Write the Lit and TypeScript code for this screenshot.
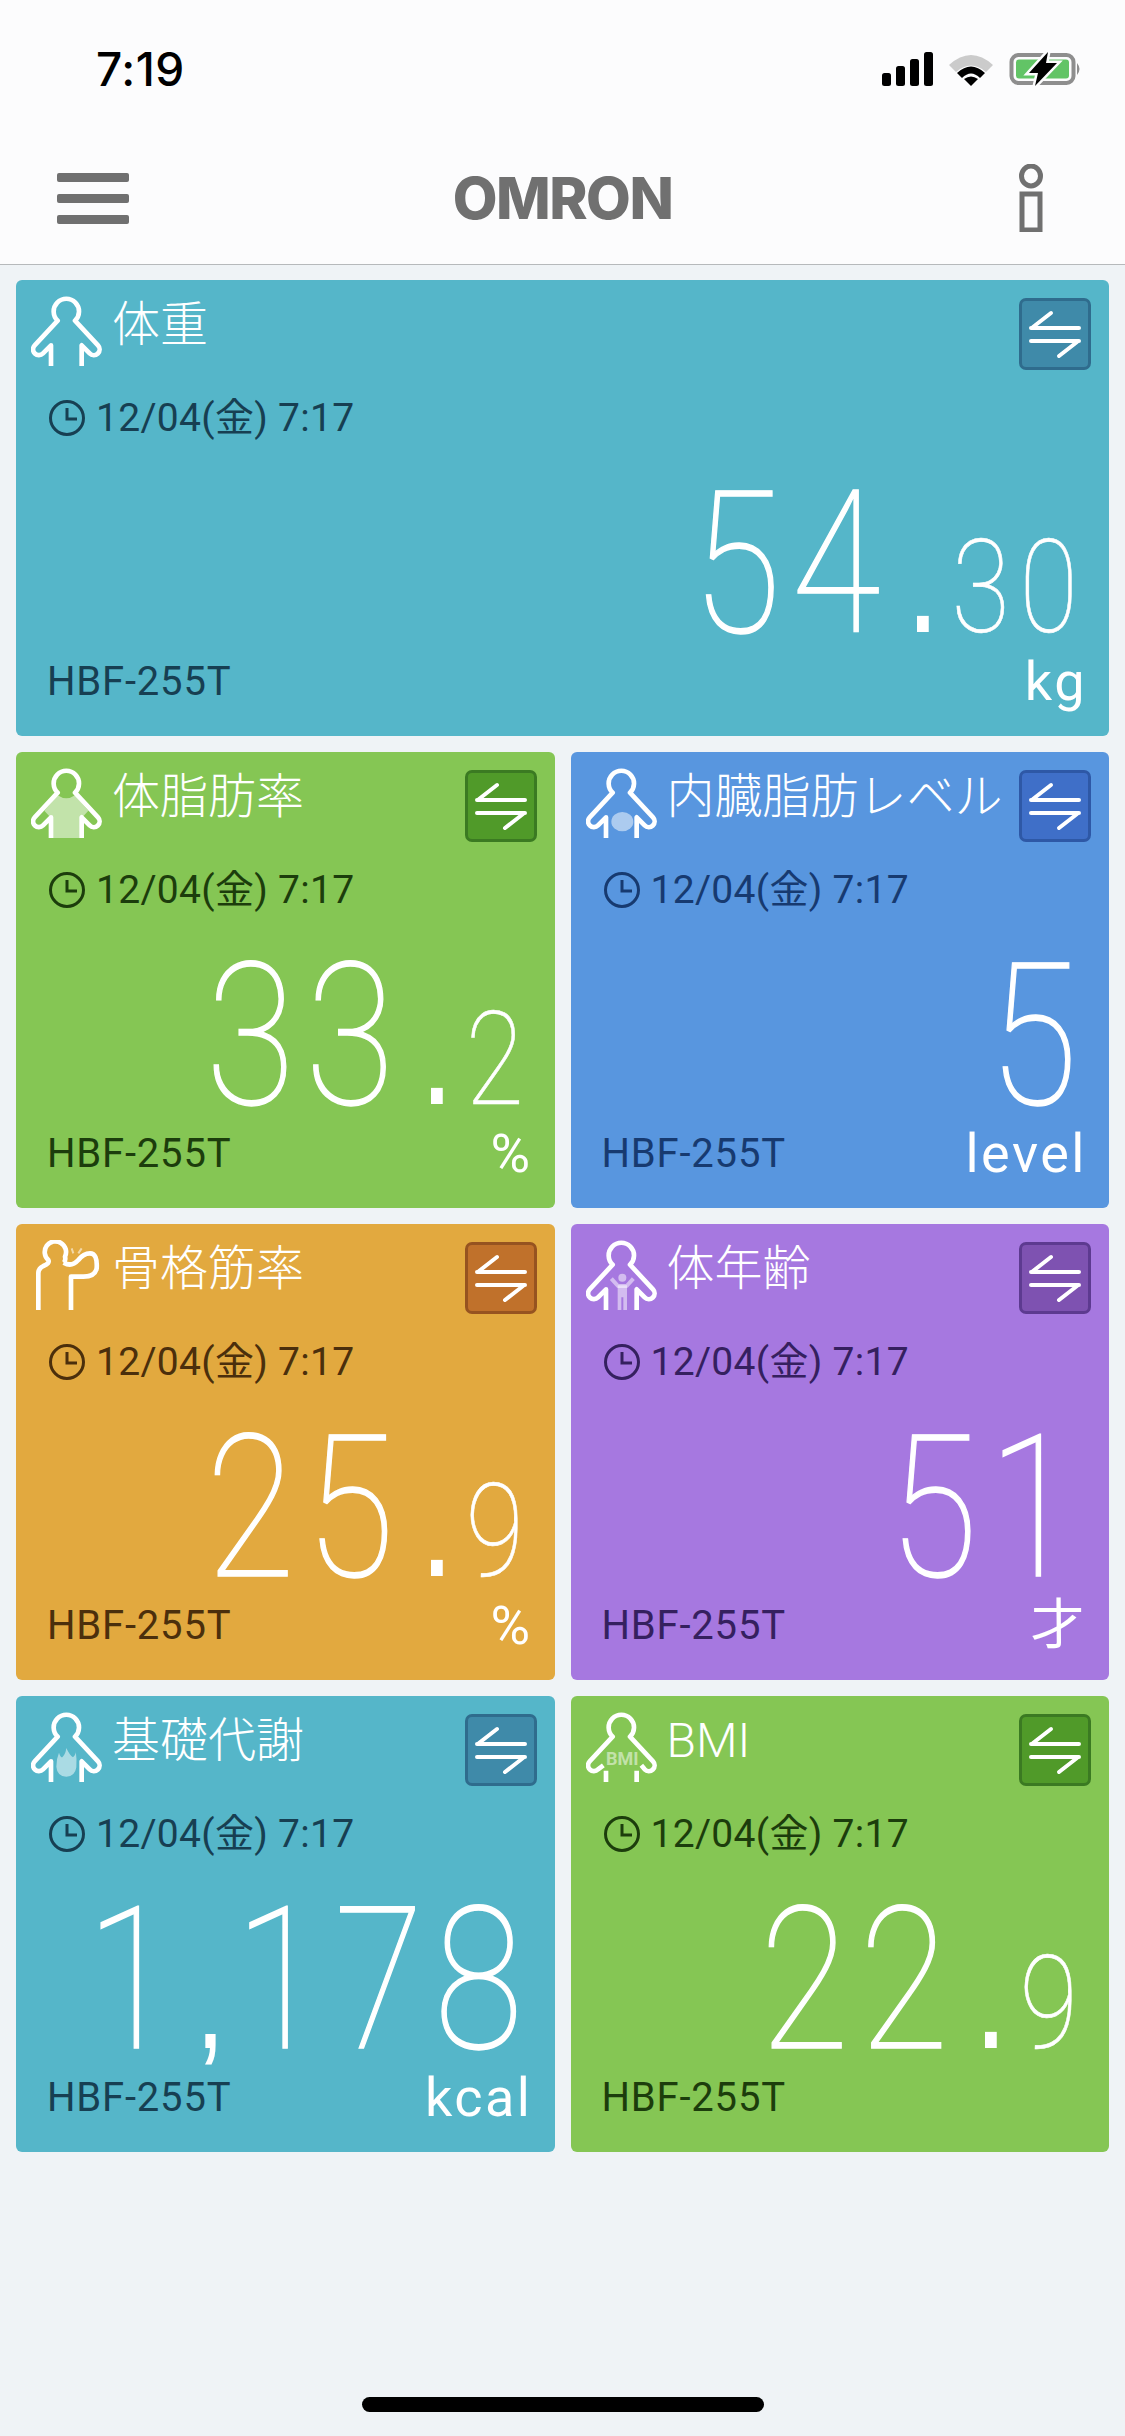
import { LitElement, css, html, svg } from 'lit'
import { customElement } from 'lit/decorators.js'

interface Metric {
  title: string
  tone: string
  icon: string
  int: string
  dec?: string
  unit: string
  wide?: boolean
}

const metrics: Metric[] = [
  { title: '体重', tone: 'teal', icon: 'plain', int: '54', dec: '30', unit: 'kg', wide: true },
  { title: '体脂肪率', tone: 'green', icon: 'fat', int: '33', dec: '2', unit: '%' },
  { title: '内臓脂肪レベル', tone: 'blue', icon: 'visceral', int: '5', unit: 'level' },
  { title: '骨格筋率', tone: 'orange', icon: 'muscle', int: '25', dec: '9', unit: '%' },
  { title: '体年齢', tone: 'purple', icon: 'age', int: '51', unit: '才' },
  { title: '基礎代謝', tone: 'teal', icon: 'flame', int: '1,178', unit: 'kcal' },
  { title: 'BMI', tone: 'green', icon: 'bmi', int: '22', dec: '9', unit: '' },
]

// head and arms are one open outline, the neck has no closing arc
const bodyPath = svg`
  <path d="M60 210 V148 L36 172 A17 17 0 0 1 11 148 L80 74 A38 38 0 1 1 132 74 L201 148 A17 17 0 0 1 176 172 L152 148 V210" />
`

function personIcon(kind: string) {
  if (kind === 'muscle') {
    return html`<svg class="person" viewBox="0 0 216 210">
      <path d="M22 210 V100 Q22 85 37 78 Q57 70 52 60 A32 32 0 1 1 102 50 Q105 62 98 68" />
      <path d="M98 68 Q122 82 142 60 Q157 40 177 40 Q200 40 197 85 Q192 110 157 110 H120 V210" />
      <path class="thin" d="M122 25 L127 40 M152 25 L142 40" />
    </svg>`
  }
  if (kind === 'bmi') {
    return html`<svg class="person" viewBox="0 0 216 210">
      <path d="M52 160 L36 172 A17 17 0 0 1 11 148 L80 74 A38 38 0 1 1 132 74 L201 148 A17 17 0 0 1 176 172 L166 160 M60 176 V210 M152 176 V210" />
      <text class="bmi" x="109" y="159" text-anchor="middle">BMI</text>
    </svg>`
  }
  return html`<svg class="person" viewBox="0 0 216 210">
    ${kind === 'fat' ? svg`<path class="pale" d="M80 82 Q106 100 132 82 L172 128 L152 150 V210 H60 V150 L40 128 Z" />` : ''}
    ${kind === 'visceral' ? svg`<ellipse class="pale" cx="109" cy="161" rx="33" ry="29" />` : ''}
    ${kind === 'age' ? svg`
      <circle class="pale" cx="109" cy="113" r="12" />
      <path class="pale-line" d="M76 116 L96 138 H122 L142 116" />
      <path class="pale" d="M95 136 H123 V210 H112 V172 H106 V210 H95 Z" />` : ''}
    ${kind === 'flame' ? svg`<path class="flame" d="M106 108 Q116 130 126 136 Q136 126 134 116 Q138 140 136 166 Q132 194 106 194 Q78 192 76 164 Q76 140 84 122 Q88 136 94 136 Q104 126 106 108 Z" />` : ''}
    ${bodyPath}
  </svg>`
}

@customElement('metric-card')
export class MetricCard extends LitElement {
  static properties = { data: { attribute: false } }
  data!: Metric

  render() {
    const m = this.data
    const [head, tail] = m.int.split(',')
    return html`
      <section class="card ${m.tone}">
        <header class="head">
          ${personIcon(m.icon)}
          <h2 class="title">${m.title}</h2>
          <button class="swap" aria-label="switch">
            <svg viewBox="0 0 66 66">
              <path d="M9 27 H57 M9 40 H57 M29 12 L11 26 M37 55 L55 41" />
            </svg>
          </button>
        </header>
        <div class="time">
          <svg class="clock" viewBox="0 0 36 36">
            <circle cx="18" cy="18" r="16.5" />
            <path d="M18 8 V19 H28" />
          </svg>
          <span>12/04(金) 7:17</span>
        </div>
        <div class="value">
          <span class="num"
            ><span class="int">${head}</span>${tail
              ? html`<span class="comma">,</span><span class="int">${tail}</span>`
              : ''}${m.dec
              ? html`<span class="dot">.</span><span class="dec">${m.dec}</span>`
              : ''}</span
          >
        </div>
        <footer class="foot">
          <span class="model">HBF-255T</span>
          <span class="unit">${m.unit}</span>
        </footer>
      </section>
    `
  }

  static styles = css`
    :host { display: block; min-width: 0; }
    .card {
      box-sizing: border-box;
      height: 456px;
      border-radius: 6px;
      padding: 16px 18px 0 15px;
      display: flex;
      flex-direction: column;
      background: var(--bg);
      color: #fff;
      overflow: hidden;
      font-family: Roboto, "Noto Sans CJK JP", sans-serif;
    }
    .teal { --bg: #55b6c9; --ink: #173f52; --btn: #3f8aa9; --edge: #2f6c8d; }
    .green { --bg: #85c654; --ink: #1c3d0c; --btn: #509a29; --edge: #3b7a22; }
    .blue { --bg: #5896df; --ink: #173a70; --btn: #3f6fc8; --edge: #2e58a6; }
    .orange { --bg: #e2a93f; --ink: #4b2f0c; --btn: #c0712b; --edge: #965320; }
    .purple { --bg: #a678e0; --ink: #35205f; --btn: #7e52b1; --edge: #5d3a90; }
    .head { display: flex; align-items: flex-start; height: 72px; }
    .person {
      width: 72px;
      height: 70px;
      flex: none;
      fill: none;
      stroke: #fff;
      stroke-width: 14;
      stroke-linejoin: round;
    }
    .person .thin { stroke-width: 6; stroke-opacity: 0.55; }
    .person .pale { fill: #fff; fill-opacity: 0.5; stroke: none; }
    .person .pale-line { stroke: #fff; stroke-opacity: 0.5; stroke-width: 12; }
    .person .flame { fill: #fff; fill-opacity: 0.5; stroke: none; }
    .person .bmi {
      fill: #fff;
      fill-opacity: 0.5;
      stroke: none;
      font: 700 54px Roboto, sans-serif;
    }
    .title {
      margin: 1px 0 0 9px;
      font-size: 48px;
      font-weight: 300;
      line-height: 56px;
      white-space: nowrap;
      flex: 1;
    }
    .swap {
      width: 72px;
      height: 72px;
      flex: none;
      padding: 0;
      margin: 2px 0 0;
      box-sizing: border-box;
      border-radius: 7px;
      border: 3px solid var(--edge);
      background: var(--btn);
    }
    .swap svg {
      display: block;
      width: 66px;
      height: 66px;
      fill: none;
      stroke: #fff;
      stroke-width: 4;
      stroke-linecap: round;
    }
    .time {
      display: flex;
      align-items: center;
      gap: 11px;
      margin: 30px 0 0 18px;
      color: var(--ink);
      font-size: 39px;
      line-height: 40px;
      letter-spacing: 0.3px;
    }
    .clock {
      width: 36px;
      height: 36px;
      fill: none;
      stroke: var(--ink);
      stroke-width: 3;
    }
    .value {
      margin-top: 26px;
      height: 200px;
      line-height: 200px;
      display: flex;
      justify-content: flex-end;
      padding-right: 3px;
      white-space: nowrap;
      font-weight: 100;
    }
    .num {
      flex: none;
      transform: scaleX(0.82);
      transform-origin: right center;
      -webkit-text-stroke: 0.6px #fff;
    }
    .int { font-size: 198px; letter-spacing: 13px; -webkit-text-stroke: 1.4px #fff; }
    .dot, .comma { font-family: "Liberation Sans", sans-serif; font-weight: 400; line-height: 200px; -webkit-text-stroke: 0; }
    .dot { font-size: 150px; margin-left: 18px; letter-spacing: 14px; }
    .comma { font-size: 130px; margin-left: 12px; letter-spacing: 12px; }
    .dec { font-size: 130px; letter-spacing: 12px; }
    .foot {
      display: flex;
      justify-content: space-between;
      align-items: flex-start;
      height: 70px;
      margin-top: -18px;
    }
    .model {
      color: var(--ink);
      font-size: 40px;
      line-height: 40px;
      letter-spacing: 0.8px;
      margin: 16px 0 0 16px;
    }
    .unit {
      font-size: 54px;
      line-height: 60px;
      letter-spacing: 2.5px;
      margin-top: 6px;
      padding-right: 4px;
    }
  `
}

@customElement('app-root')
export class AppRoot extends LitElement {
  render() {
    return html`
      <div class="top">
        <div class="status">
          <span class="clock-text">7:19</span>
          <div class="indicators">
            <svg width="52" height="34" viewBox="0 0 52 34">
              <rect x="0" y="21" width="9" height="13" rx="2.5" />
              <rect x="14" y="14" width="9" height="20" rx="2.5" />
              <rect x="28" y="7" width="9" height="27" rx="2.5" />
              <rect x="42" y="0" width="9" height="34" rx="2.5" />
            </svg>
            <svg width="46" height="34" viewBox="0 0 46 34">
              <path d="M1 13 Q23 -7 45 13 L38 20 Q23 7 8 20 Z" fill="#cbcbcb" />
              <path d="M9 21 Q23 8 37 21 L32 26 Q23 17 14 26 Z" />
              <path d="M16 27 Q23 22 30 27 L23 34 Z" />
            </svg>
            <svg width="74" height="34" viewBox="0 0 74 34">
              <rect x="3.5" y="3" width="62" height="28" rx="7" fill="none" stroke="#8e8e8e" stroke-width="4" />
              <rect x="8" y="7.5" width="53" height="19" rx="3" fill="#62c466" />
              <path d="M69 11 Q74 17 69 23 Z" fill="#8e8e8e" />
              <path d="M40 0 L21 21 H30 L27 34 L49 11 H38 Z" stroke="#fcfcfd" stroke-width="5" paint-order="stroke" />
            </svg>
          </div>
        </div>
        <nav class="nav">
          <div class="burger"><i></i><i></i><i></i></div>
          <span class="logo">OMRON</span>
          <svg class="info" width="24" height="68" viewBox="0 0 24 68">
            <ellipse cx="12" cy="12" rx="9.5" ry="10" />
            <rect x="3" y="30" width="18" height="36" />
          </svg>
        </nav>
      </div>
      <main class="grid">
        ${metrics.map(
          (m) => html`<metric-card class=${m.wide ? 'wide' : ''} .data=${m}></metric-card>`
        )}
      </main>
      <div class="home"></div>
    `
  }

  static styles = css`
    :host {
      display: flex;
      flex-direction: column;
      min-height: 2436px;
      background: #eff3f6;
    }
    .top {
      height: 264px;
      background: #fcfcfd;
      border-bottom: 1px solid #b6b9bb;
    }
    .status {
      height: 132px;
      box-sizing: border-box;
      padding: 52px 43px 0 96px;
      display: flex;
      justify-content: space-between;
      align-items: flex-start;
    }
    .clock-text {
      font: 500 46px/34px Inter, sans-serif;
      letter-spacing: 0.5px;
      color: #000;
    }
    .indicators { display: flex; gap: 14px; }
    .nav {
      height: 132px;
      box-sizing: border-box;
      padding: 0 57px;
      display: grid;
      grid-template-columns: 1fr auto 1fr;
      align-items: center;
    }
    .burger { width: 72px; display: flex; flex-direction: column; gap: 12px; }
    .burger i { display: block; height: 9px; border-radius: 2px; background: #707070; }
    .logo {
      font: 800 58px/60px Inter, sans-serif;
      color: #707070;
      letter-spacing: -1.5px;
    }
    .info { fill: none; stroke: #707070; stroke-width: 5; justify-self: end; margin-right: 25px; }
    .grid {
      display: grid;
      grid-template-columns: 1fr 1fr;
      gap: 16px;
      padding: 15px 16px 0;
    }
    .wide { grid-column: 1 / 3; }
    .home {
      width: 402px;
      height: 15px;
      border-radius: 8px;
      background: #000;
      margin: auto auto 24px;
    }
  `
}
